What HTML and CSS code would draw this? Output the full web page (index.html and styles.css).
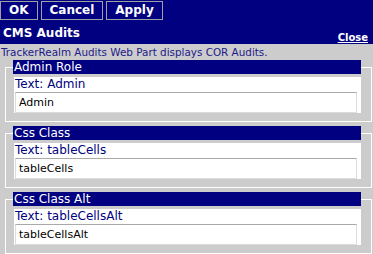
FILE: index.html
```html
<!DOCTYPE html>
<html lang="en">
<head>
  <meta charset="UTF-8" />
  <title>CMS Audits</title>
  <link rel="stylesheet" href="styles.css">
</head>
<body>

  <div class="toolbar">
    <div class="buttons">
      <button class="btn">OK</button>
      <button class="btn">Cancel</button>
      <button class="btn">Apply</button>
    </div>
    <div class="title-row">
      <span class="title">CMS Audits</span>
      <a href="#" class="close">Close</a>
    </div>
  </div>

  <p class="desc">TrackerRealm Audits Web Part displays COR Audits.</p>

  <fieldset class="prop">
    <legend>Admin Role</legend>
    <div class="field">
      <label>Text: Admin</label>
      <input type="text" value="Admin" />
    </div>
  </fieldset>

  <fieldset class="prop">
    <legend>Css Class</legend>
    <div class="field">
      <label>Text: tableCells</label>
      <input type="text" value="tableCells" />
    </div>
  </fieldset>

  <fieldset class="prop">
    <legend>Css Class Alt</legend>
    <div class="field">
      <label>Text: tableCellsAlt</label>
      <input type="text" value="tableCellsAlt" />
    </div>
  </fieldset>

</body>
</html>
```

FILE: styles.css
```css
body {
  margin: 0;
  background: #cccccc;
  font-family: 'DejaVu Sans', Verdana, sans-serif;
  color: #000080;
}

.toolbar {
  background: #000080;
  height: 44px;
  color: #fff;
}

.buttons {
  display: flex;
  gap: 3px;
  padding-top: 1px;
}

.btn {
  height: 19px;
  padding: 0 8px;
  margin: 0;
  background: #000080;
  color: #fff;
  border: 1px solid #a0a0a0;
  font-family: 'DejaVu Sans', Verdana, sans-serif;
  font-weight: bold;
  font-size: 12px;
  line-height: 17px;
}

.title-row {
  display: flex;
  justify-content: space-between;
  align-items: flex-end;
  padding: 6px 5px 0 3px;
}

.title {
  font-weight: bold;
  font-size: 12px;
}

.close {
  color: #fff;
  font-weight: bold;
  font-size: 10px;
  text-decoration: underline;
  position: relative;
  top: 3px;
}

.desc {
  margin: 0;
  padding: 2px 1px;
  font-size: 10.4px;
  line-height: 12px;
  color: #221a8a;
}

.prop {
  margin: 0 4px 4px 5px;
  padding: 0 10px 8px 8px;
  border: 1px solid #fff;
}

.prop legend {
  width: 348px;
  box-sizing: border-box;
  margin-left: -1px;
  padding: 0 1px;
  background: #000080;
  color: #fff;
  font-size: 12px;
  line-height: 14px;
}

.field {
  background: #fff;
  margin-top: 3px;
  padding: 0 4px 0 1px;
  display: flex;
  flex-direction: column;
}

.field label {
  font-size: 12px;
  line-height: 15px;
  color: #000080;
}

.field input {
  height: 21px;
  box-sizing: border-box;
  margin: 0;
  padding: 0 3px;
  border: 1px solid #dcdcdc;
  border-top-color: #a9a9a9;
  font-family: 'DejaVu Sans', Tahoma, sans-serif;
  font-size: 11px;
  color: #000;
}
```
